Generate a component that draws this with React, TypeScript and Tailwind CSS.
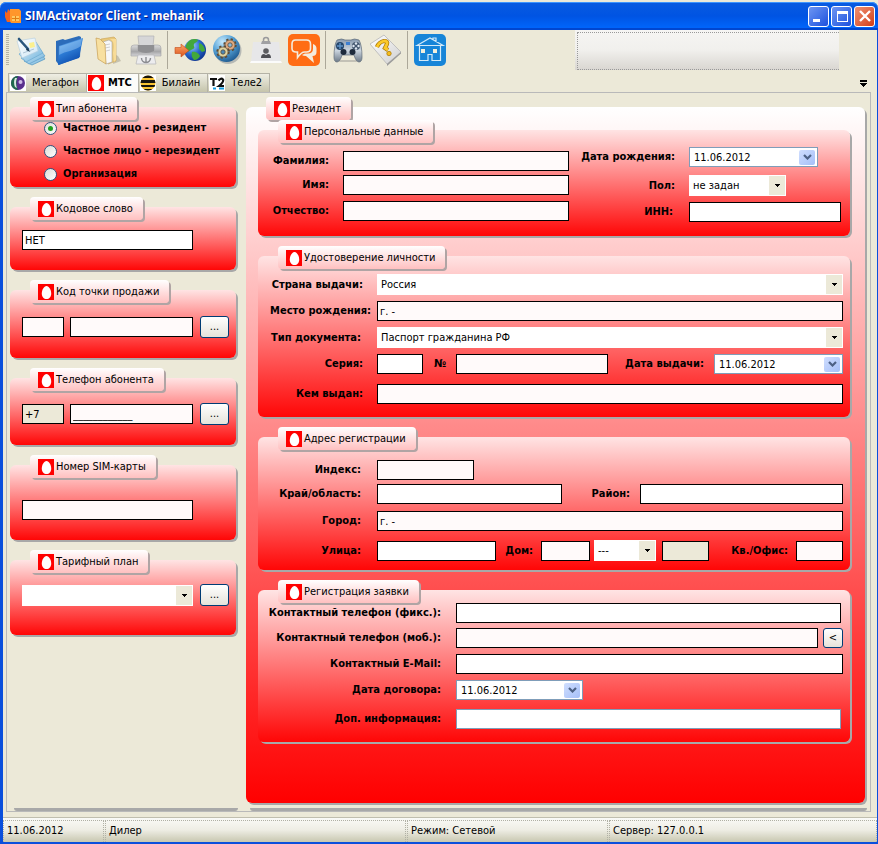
import type { ReactNode } from 'react';

const RED_BODY =
  'bg-linear-to-b/srgb from-[#ffe4e4] to-[#ff0606] rounded-md shadow-[2px_2px_0_#a8a8a8]';
const FIELD = 'h-5 min-w-0 border px-0.5 text-[11px] outline-none';
const WARM = 'bg-[#fffafa]';

function EggIcon() {
  return (
    <svg className="size-4 shrink-0" viewBox="0 0 16 16" aria-hidden="true">
      <rect width="16" height="16" fill="#ff0000" />
      <path d="M8.500 2C11 2 13.200 6 13.200 9.500C13.200 13 11.200 15 8.500 15S3.800 13 3.800 9.500C3.800 6 6 2 8.500 2Z" fill="#fff" />
    </svg>
  );
}

function Legend({ children }: { children: ReactNode }) {
  return (
    <h2 className="-mt-2.5 ml-5 flex h-[23px] items-center gap-0.5 self-start rounded-sm bg-linear-to-b/srgb from-white to-[#ffc0c0] pr-2.5 pl-2 font-normal whitespace-nowrap shadow-[2px_2px_0_#b0a4a4]">
      <EggIcon />
      {children}
    </h2>
  );
}

function Group({ title, className = '', children }: { title: string; className?: string; children: ReactNode }) {
  return (
    <section className={`mt-2.5 flex flex-col ${RED_BODY} ${className}`}>
      <Legend>{title}</Legend>
      {children}
    </section>
  );
}

function Text({ id, label, className = '', value = '', bg = 'bg-white', line = 'border-black' }: { id: string; label?: string; className?: string; value?: string; bg?: string; line?: string }) {
  return <input id={id} aria-label={label} type="text" defaultValue={value} className={`${FIELD} ${line} ${bg} ${className}`} />;
}

function Select({ id, label, value, className = '' }: { id: string; label?: string; value: string; className?: string }) {
  return (
    <div className={`relative h-[21px] bg-white ${className}`}>
      <select id={id} aria-label={label} className="h-full w-full appearance-none bg-transparent pr-5 pl-1 text-[11px] outline-none">
        <option>{value}</option>
      </select>
      <span className="pointer-events-none absolute inset-y-px right-px flex w-4 items-center justify-center bg-[#ece9d8]">
        <svg width="5" height="3" viewBox="0 0 5 3" shapeRendering="crispEdges">
          <path d="M0 0h5v1H4v1H3v1H2V2H1V1H0z" />
        </svg>
      </span>
    </div>
  );
}

function DateField({ id, className = '' }: { id: string; className?: string }) {
  return (
    <div className={`flex h-5 items-center border border-[#7f9db9] bg-white pr-0.5 ${className}`}>
      <input id={id} type="text" defaultValue="11.06.2012" className="h-full w-0 min-w-0 flex-1 pl-1 text-[11px] outline-none" />
      <button type="button" aria-label="Календарь" className="flex h-[15px] w-4 items-center justify-center rounded-xs bg-linear-to-br from-[#d0defe] to-[#a5bff8]">
        <svg width="9" height="6" viewBox="0 0 9 6">
          <path d="M1 1l3.500 3.500L8 1" fill="none" stroke="#4d6185" strokeWidth="2.200" />
        </svg>
      </button>
    </div>
  );
}

function Label({ htmlFor, className = '', children }: { htmlFor: string; className?: string; children: ReactNode }) {
  return (
    <label htmlFor={htmlFor} className={`shrink-0 text-right font-bold whitespace-nowrap ${className}`}>
      {children}
    </label>
  );
}

function DotsButton({ label }: { label: string }) {
  return (
    <button type="button" aria-label={label} className="ml-[7px] h-[22px] w-[29px] rounded-[3px] border border-[#003c74] bg-linear-to-b from-white to-[#e6e3da] text-[11px] leading-4">
      ...
    </button>
  );
}

function Radio({ label, checked }: { label: string; checked?: boolean }) {
  return (
    <label className="flex h-4 items-center gap-1.5 font-bold whitespace-nowrap">
      <input
        type="radio"
        name="subscriber"
        defaultChecked={checked}
        className="grid size-[13px] shrink-0 appearance-none place-items-center rounded-full border border-[#2f5580] bg-linear-to-br from-[#dcdcd7] to-white before:size-[5px] before:rounded-full checked:before:bg-[#21a121]"
      />
      {label}
    </label>
  );
}

/* Toolbar pictures */

function NotesIcon() {
  return (
    <svg className="size-8" viewBox="0 0 32 32">
      <defs>
        <linearGradient id="nt" x1="0" y1="0" x2="1" y2="1"><stop stopColor="#fff" /><stop offset="1" stopColor="#cfe6f5" /></linearGradient>
        <linearGradient id="nu" x1="0" y1="0" x2="1" y2="1"><stop stopColor="#e6f3fb" /><stop offset="1" stopColor="#6fb3dc" /></linearGradient>
      </defs>
      <path d="M8 27l16-9 5 7-13 6z" fill="url(#nu)" stroke="#4f94c0" strokeWidth=".7" />
      <path d="M5 24l17-11 7 9-16 8z" fill="url(#nu)" stroke="#5b9cc8" strokeWidth=".7" />
      <path d="M3 20l17-12 7 11-17 9z" fill="url(#nu)" stroke="#6aa9d0" strokeWidth=".7" />
      <path d="M1 7l18-3 3 13-16 7z" fill="url(#nt)" stroke="#b4cddd" strokeWidth=".6" />
      <path d="M13 9l5-1 1 5-5 1z" fill="#fbf08f" />
      <path d="M7 19l11-4" stroke="#9db8cc" strokeWidth=".8" />
      <path d="M3 5l9 10" stroke="#2a567d" strokeWidth="2.600" strokeLinecap="round" />
      <path d="M11 14l3.500 4-4.500-2z" fill="#18344e" />
    </svg>
  );
}

function BlueFolderIcon() {
  return (
    <svg className="size-8" viewBox="0 0 32 32">
      <defs>
        <linearGradient id="bf" x1="0" y1="0" x2=".5" y2="1"><stop stopColor="#7dbcf4" /><stop offset=".5" stopColor="#2f7fd8" /><stop offset="1" stopColor="#0d4cae" /></linearGradient>
      </defs>
      <path d="M2 7l7-2 2 1 14-4 2 1-1 20L5 31l-3-4z" fill="#2c6cba" />
      <path d="M5 12L29 4l-4 20L4 31z" fill="url(#bf)" />
      <path d="M5.500 12.500L28 5l-1.200 7C20 17 12 17 5 21z" fill="#b6ddfb" opacity=".4" />
    </svg>
  );
}

function YellowFolderIcon() {
  return (
    <svg className="size-8" viewBox="0 0 32 32">
      <path d="M22 20l4 2 3 5-8 3z" fill="#9a927d" opacity=".45" />
      <path d="M9 5l13-2 2 2v22l-8 3z" fill="#e9c878" stroke="#c9a153" strokeWidth=".6" />
      <path d="M11 8l6-2 3 2v20l-6 2z" fill="#f7f7f7" stroke="#a9a9a9" strokeWidth=".6" />
      <path d="M13 11l5-1M13 14l5-1M14 17l4-1" stroke="#c4c4c4" strokeWidth=".8" />
      <path d="M4 4l4 1 5 5 1 20-8-5z" fill="#f8e0a0" stroke="#c79d52" strokeWidth=".7" />
      <path d="M18 5c5 2 4 9 3 14l1 9 2-2V5z" fill="#f8dc98" />
    </svg>
  );
}

function PrinterIcon() {
  return (
    <svg className="size-8" viewBox="0 0 32 32">
      <defs>
        <linearGradient id="pr" x1="0" y1="0" x2="0" y2="1"><stop stopColor="#dcdcdc" /><stop offset=".6" stopColor="#a6a6a8" /><stop offset="1" stopColor="#d5d5d8" /></linearGradient>
      </defs>
      <path d="M8 2h16l-1 10H9z" fill="#d6d6d8" stroke="#b1b1b4" strokeWidth=".7" />
      <path d="M1 14q0-3 3-3h4v5h16v-5h4q3 0 3 3v8H1z" fill="url(#pr)" stroke="#a3a3a6" strokeWidth=".6" />
      <path d="M8 11h16v6q-8 4-16 0z" fill="#8f8f92" />
      <path d="M8 21h16l2 9H6z" fill="#ececee" stroke="#b4b4b8" strokeWidth=".7" />
      <path d="M11.500 24a4.500 4.500 0 1 0 9 0M16 29v-6" fill="none" stroke="#8b8c91" strokeWidth="1.400" />
    </svg>
  );
}

function GlobeIcon() {
  return (
    <svg className="size-8" viewBox="0 0 32 32">
      <defs>
        <radialGradient id="gl" cx=".35" cy=".3" r=".8"><stop stopColor="#a0d0ff" /><stop offset=".5" stopColor="#2869cd" /><stop offset="1" stopColor="#0b2d86" /></radialGradient>
        <linearGradient id="ar" x1="0" y1="0" x2="0" y2="1"><stop stopColor="#ffa469" /><stop offset="1" stopColor="#d8541b" /></linearGradient>
      </defs>
      <circle cx="21" cy="16" r="11" fill="url(#gl)" />
      <path d="M14 8c4-4 8-3 10-2-1 3-3 2-4 4s2 4-1 5-4 4-7 2c-1-4 0-7 2-9zM25 9c4 1 6 5 6 8l-3 1-3-3zM18 18c4-1 7 2 8 4-1 2-3 4-6 4-2-2-3-5-2-8z" fill="#43a83a" />
      <path d="M1 13.500h6V10l8 6.500L7 23v-3.500H1z" fill="url(#ar)" stroke="#c24a17" strokeWidth=".6" />
    </svg>
  );
}

function Gear({ x, y, fill, hub }: { x: number; y: number; fill: string; hub: string }) {
  return (
    <g transform={`translate(${x} ${y})`}>
      <circle r="5.200" fill="none" stroke="#5b4a35" strokeWidth="3" strokeDasharray="2 2.080" />
      <circle r="5" fill={fill} stroke="#6b573e" strokeWidth=".7" />
      <circle r="2.200" fill={hub} stroke="#5b4a35" strokeWidth=".8" />
    </g>
  );
}

function GearsIcon() {
  return (
    <svg className="size-8" viewBox="0 0 32 32">
      <defs>
        <radialGradient id="gb" cx=".35" cy=".25" r=".8"><stop stopColor="#c5e8fb" /><stop offset=".5" stopColor="#56a3d8" /><stop offset="1" stopColor="#1d588f" /></radialGradient>
      </defs>
      <circle cx="16" cy="16.500" r="13.500" fill="#7f8a92" opacity=".5" />
      <circle cx="14.500" cy="14.500" r="13.500" fill="url(#gb)" />
      <Gear x={18} y={11} fill="#dfa980" hub="#86b9dc" />
      <Gear x={11} y={18} fill="#ded3a0" hub="#4b88b5" />
    </svg>
  );
}

function BadgeIcon() {
  return (
    <svg className="size-8" viewBox="0 0 32 32">
      <path d="M3 8h26l2 20H1z" fill="#e7e7e9" />
      <path d="M1 27h30l1 2H0z" fill="#fbfbfb" />
      <path d="M13.500 7V6a2.500 2.500 0 0 1 5 0v1" fill="none" stroke="#9a9a9c" strokeWidth="1.500" />
      <path d="M11 10l1-3h8l1 3z" fill="#a0a0a3" />
      <circle cx="16" cy="17" r="2.800" fill="#5d5d61" />
      <path d="M11 24q0-4 3-4l2 1 2-1q3 0 3 4z" fill="#4f4f54" />
    </svg>
  );
}

function ChatIcon() {
  return (
    <svg className="size-8" viewBox="0 0 32 32">
      <rect width="32" height="32" rx="5" fill="#ff6c14" />
      <path d="M7.500 6h11q4 0 4 4v4.500q0 3.500-4 3.500h-2q-3 0-7 5.500V18H8q-4 0-4-3.500V10q0-4 3.500-4z" fill="none" stroke="#f4ecdd" strokeWidth="1.600" />
      <path d="M25 10q3.500 1 3.500 4.500V18q0 4-4 4l1.500 7-8-7q-3 0-4-1l3-1.500h3q5 0 5-5z" fill="#f4ecdd" />
    </svg>
  );
}

function GamepadIcon() {
  return (
    <svg className="size-8" viewBox="0 0 32 32">
      <defs>
        <linearGradient id="gp" x1="0" y1="0" x2="0" y2="1"><stop stopColor="#8698ad" /><stop offset=".5" stopColor="#cbd5df" /><stop offset="1" stopColor="#6c7987" /></linearGradient>
      </defs>
      <path d="M7 26h18v2H7z" fill="#777" opacity=".35" />
      <path d="M5 6q5-2 8 0h6q3-2 8 0 3 5 3 17 0 5-3 5-3 0-5-7H10q-2 7-5 7-3 0-3-5Q2 11 5 6z" fill="url(#gp)" stroke="#5f6b79" strokeWidth=".7" />
      <circle cx="8" cy="12" r="4" fill="#24476e" /><path d="M8 9v6M5 12h6" stroke="#5f93c6" strokeWidth="1.400" />
      <circle cx="24" cy="12" r="4" fill="#43566e" />
      <circle cx="24" cy="9.500" r="1.200" fill="#dfe7f2" /><circle cx="24" cy="14.500" r="1.200" fill="#dfe7f2" /><circle cx="21.500" cy="12" r="1.200" fill="#dfe7f2" /><circle cx="26.500" cy="12" r="1.200" fill="#dfe7f2" />
      <circle cx="11.500" cy="18" r="3" fill="#1e2b3c" /><circle cx="20.500" cy="18" r="3" fill="#1e2b3c" />
      <rect x="14" y="8" width="4" height="3" fill="#3e7fd0" />
    </svg>
  );
}

function HelpCardIcon() {
  return (
    <svg className="size-8" viewBox="0 0 32 32">
      <defs>
        <linearGradient id="hc" x1="0" y1="0" x2="1" y2="1"><stop stopColor="#fff" /><stop offset="1" stopColor="#cfcfcf" /></linearGradient>
      </defs>
      <path d="M0 10L14 1l17 17-14 12z" fill="url(#hc)" stroke="#b5b5b5" strokeWidth=".8" />
      <path d="M17 30l14-12v1.500L17 32z" fill="#999" />
      <path d="M7 13q2-5 7-6 4 0 3 3l-2 4 3 2" fill="none" stroke="#a87403" strokeWidth="4.200" />
      <path d="M7 13q2-5 7-6 4 0 3 3l-2 4 3 2" fill="none" stroke="#fbc928" strokeWidth="2.800" />
      <circle cx="19" cy="19.500" r="2.200" fill="#f5bd1e" stroke="#a87403" strokeWidth=".7" />
    </svg>
  );
}

function HouseIcon() {
  return (
    <svg className="size-8" viewBox="0 0 32 32">
      <rect width="32" height="32" rx="5" fill="#1785d8" />
      <g fill="none" stroke="#d3eaf9" strokeWidth="1.200">
        <path d="M3 11.500L16 4l13 7.500zM19 5.500V4h3v4M5.500 12v14.500H14v-6h4v6h8.500V12" />
      </g>
      <path d="M7 15h4v4H7zM19 15h4v4h-4z" fill="#f2efdc" />
    </svg>
  );
}

function AppIcon() {
  return (
    <svg className="size-4" viewBox="0 0 16 16">
      <path d="M0 3l2 2 1-4 2 2 2-2v13H2L0 9z" fill="#f5631c" />
      <path d="M5 1h9l2 2v12H6l-1-2z" fill="#ff962b" />
      <rect x="7" y="8" width="7" height="5" fill="#ffc861" />
      <path d="M7 10.500h7M10.500 8v5" stroke="#e07d12" />
    </svg>
  );
}

function MegafonIcon() {
  return (
    <svg className="size-4" viewBox="0 0 16 16">
      <rect width="16" height="16" fill="#fff" />
      <circle cx="8" cy="8" r="7" fill="#59308d" />
      <path d="M8 1a7 7 0 0 0 0 14c-2-4-2-9 0-14z" fill="#1f6b4d" />
      <path d="M5 3q-2 4 0 9l2 1q-2-5 0-10z" fill="#d9e6e2" />
      <circle cx="10.500" cy="7" r="2" fill="#cdb9e6" />
    </svg>
  );
}

function BeelineIcon() {
  return (
    <svg className="size-4" viewBox="0 0 16 16">
      <rect width="16" height="16" fill="#fff" />
      <clipPath id="bee"><circle cx="8" cy="8" r="7.500" /></clipPath>
      <g clipPath="url(#bee)">
        <rect width="16" height="16" fill="#f9c332" />
        <path d="M0 0h16v3H0zM0 5h16v3H0zM0 10h16v2H0zM0 14h16v2H0z" fill="#18150e" />
      </g>
    </svg>
  );
}

function Tele2Icon() {
  return (
    <svg className="size-4" viewBox="0 0 16 16">
      <rect width="16" height="16" fill="#fff" />
      <path d="M1 4h7M4.500 4v7M9.500 5.500Q12 2.500 14 4.500 15 7 10 11h5" fill="none" stroke="#111" strokeWidth="2.200" />
      <path d="M4 13.500h3M10 13.500h5" stroke="#159be0" strokeWidth="2" />
    </svg>
  );
}

function ToolGroup({ items }: { items: [string, ReactNode][] }) {
  return (
    <div className="flex gap-1.5">
      {items.map(([name, icon]) => (
        <button key={name} type="button" aria-label={name} className="size-8">
          {icon}
        </button>
      ))}
    </div>
  );
}

function Separator() {
  return <div className="mr-1.5 ml-[5px] h-[38px] w-px bg-[#aca899]" />;
}

function Tab({ icon, children, active }: { icon: ReactNode; children: ReactNode; active?: boolean }) {
  return (
    <button
      type="button"
      role="tab"
      aria-selected={!!active}
      className={`flex h-[19px] items-center border-t border-r border-[#b4b2a6] pl-px ${
        active ? 'gap-1 bg-[#fcfcfa] pr-1.5 font-bold' : 'gap-1.5 bg-linear-to-b from-[#efeee4] to-[#c5c4ab] pr-[7px]'
      }`}
    >
      {icon}
      {children}
    </button>
  );
}

const CAPTION = 'flex size-[21px] items-center justify-center rounded-[3px] border border-white';

export default function App() {
  return (
    <div className="flex min-h-screen flex-col bg-[#ece9d8] pt-0.5 font-['DejaVu_Sans_Condensed','DejaVu_Sans',sans-serif] text-[11px] leading-[14px] text-black">
      <header className="flex h-7 items-center gap-1 rounded-t-md bg-linear-to-b from-[#0a5be0] via-[#0054e3] to-[#0068ff] pr-[3px] pl-[5px] shadow-[inset_0_1px_0_#3c95ff,inset_0_-2px_0_#0046d0]">
        <AppIcon />
        <h1 className="flex-1 font-['Open_Sans',sans-serif] text-[12px] font-bold text-white [text-shadow:1px_1px_0_#0a1883]">SIMActivator Client - mehanik</h1>
        <div className="flex gap-0.5">
          <button type="button" aria-label="Свернуть" className={`${CAPTION} bg-linear-to-br from-[#6e95f2] to-[#1d4fdd]`}>
            <svg className="size-4" viewBox="0 0 16 16"><path d="M2 11h7v3H2z" fill="#fff" /></svg>
          </button>
          <button type="button" aria-label="Развернуть" className={`${CAPTION} bg-linear-to-br from-[#6e95f2] to-[#1d4fdd]`}>
            <svg className="size-4" viewBox="0 0 16 16" shapeRendering="crispEdges"><path d="M3 3h11v11H3zM4 6v7h9V6z" fill="#fff" fillRule="evenodd" /></svg>
          </button>
          <button type="button" aria-label="Закрыть" className={`${CAPTION} bg-linear-to-br from-[#ee9070] to-[#d33a10]`}>
            <svg className="size-4" viewBox="0 0 16 16"><path d="M3 3l10 10M13 3L3 13" stroke="#fff" strokeWidth="2.400" /></svg>
          </button>
        </div>
      </header>

      <div className="flex flex-1 flex-col border-r border-b-2 border-l-[3px] border-[#0a4fdc]">
        <div role="toolbar" className="flex h-10 items-center pl-[3px]">
          <div className="mr-[7px] h-8 w-[3px] bg-[repeating-linear-gradient(to_bottom,#b5b3a5_0_1px,#ece9d8_1px_2px)]" />
          <ToolGroup items={[['Договор', <NotesIcon />], ['Открыть', <BlueFolderIcon />], ['Архив', <YellowFolderIcon />], ['Печать', <PrinterIcon />]]} />
          <Separator />
          <ToolGroup items={[['Отправить', <GlobeIcon />], ['Настройки', <GearsIcon />], ['Абонент', <BadgeIcon />], ['Сообщения', <ChatIcon />]]} />
          <Separator />
          <ToolGroup items={[['Игры', <GamepadIcon />], ['Справка', <HelpCardIcon />]]} />
          <Separator />
          <ToolGroup items={[['Домой', <HouseIcon />]]} />
          <div className="mr-[38px] ml-auto h-10 w-[264px] bg-linear-to-b from-[#f6f5f3] via-[#f1f0ed] to-[#d9d6d1] pt-0.5 pl-0.5">
            <div className="h-[38px] border-y border-l border-dotted border-[#999]" />
          </div>
        </div>

        <div className="mt-[3px] flex items-end pr-2.5 pl-[5px]">
          <div role="tablist" className="flex border-l border-[#b4b2a6]">
            <Tab icon={<MegafonIcon />}>Мегафон</Tab>
            <Tab active icon={<EggIcon />}>МТС</Tab>
            <Tab icon={<BeelineIcon />}>Билайн</Tab>
            <Tab icon={<Tele2Icon />}>Теле2</Tab>
          </div>
          <button type="button" aria-label="Список вкладок" className="mb-[5px] ml-auto">
            <svg width="7" height="7" viewBox="0 0 7 7" shapeRendering="crispEdges"><path d="M0 0h7v2H0zM0 3h7v1H6v1H5v1H4v1H3V6H2V5H1V4H0z" /></svg>
          </button>
        </div>

        <main className="mr-1.5 ml-[3px] flex flex-1 flex-col border border-[#b9b9b9] pr-[5px] pl-[3px]">
          <div className="flex flex-1 gap-2.5 pt-1">
            <div className="flex w-[226px] shrink-0 flex-col gap-2.5">
              <Group title="Тип абонента" className="pb-[5px]">
                <div className="flex flex-col gap-[7px] pl-[34px]">
                  <Radio label="Частное лицо - резидент" checked />
                  <Radio label="Частное лицо - нерезидент" />
                  <Radio label="Организация" />
                </div>
              </Group>
              <Group title="Кодовое слово" className="pb-5">
                <div className="flex pt-2.5 pl-3"><Text id="code" label="Кодовое слово" value="НЕТ" className="w-[171px]" /></div>
              </Group>
              <Group title="Код точки продажи" className="pb-5">
                <div className="flex items-center pt-[13px] pl-3">
                  <Text id="pos1" label="Код" bg={WARM} className="mr-1.5 w-[42px]" />
                  <Text id="pos2" label="Точка продажи" bg={WARM} className="w-[123px]" />
                  <DotsButton label="Выбрать точку" />
                </div>
              </Group>
              <Group title="Телефон абонента" className="pb-5">
                <div className="flex items-center pt-3 pl-3">
                  <Text id="prefix" label="Код страны" value="+7" bg="bg-[#ece9d8]" className="mr-1.5 w-[42px]" />
                  <Text id="phone" label="Телефон абонента" value="____________" bg={WARM} className="w-[123px]" />
                  <DotsButton label="Выбрать телефон" />
                </div>
              </Group>
              <Group title="Номер SIM-карты" className="pb-5">
                <div className="flex pt-[22px] pl-3"><Text id="sim" label="Номер SIM-карты" bg={WARM} className="w-[171px]" /></div>
              </Group>
              <Group title="Тарифный план" className="pb-[29px]">
                <div className="flex items-center pt-[11px] pl-3">
                  <Select id="plan" label="Тарифный план" value="" className="w-[171px]" />
                  <DotsButton label="Выбрать план" />
                </div>
              </Group>
            </div>

            <section className="mt-2.5 mb-[5px] flex flex-1 flex-col rounded-md bg-linear-to-b/srgb from-white to-[#ff0000] pr-[15px] pb-[61px] pl-3 shadow-[2px_2px_0_#a8a8a8]">
              <div className="-ml-3 flex"><Legend>Резидент</Legend></div>

              <div className="flex flex-col gap-2.5">
                <Group title="Персональные данные" className="pb-3.5">
                  <div className="flex pr-[9px]">
                    <div className="flex flex-1 flex-col pt-2">
                      <div className="mb-1 flex items-center"><Label htmlFor="surname" className="w-[85px] pr-3.5">Фамилия:</Label><Text id="surname" bg={WARM} className="flex-1" /></div>
                      <div className="mb-1.5 flex items-center"><Label htmlFor="name" className="w-[85px] pr-3.5">Имя:</Label><Text id="name" bg={WARM} className="flex-1" /></div>
                      <div className="flex items-center"><Label htmlFor="patronymic" className="w-[85px] pr-3.5">Отчество:</Label><Text id="patronymic" bg={WARM} className="flex-1" /></div>
                    </div>
                    <div className="flex flex-col pt-1">
                      <div className="mb-2 flex items-center"><Label htmlFor="birth" className="w-[120px] pr-3.5">Дата рождения:</Label><DateField id="birth" className="w-[129px]" /></div>
                      <div className="mb-1.5 flex items-center"><Label htmlFor="sex" className="w-[120px] pr-3.5">Пол:</Label><Select id="sex" value="не задан" className="w-[97px]" /></div>
                      <div className="flex items-center"><Label htmlFor="inn" className="w-[120px] pr-4">ИНН:</Label><Text id="inn" className="w-[152px]" /></div>
                    </div>
                  </div>
                </Group>

                <Group title="Удостоверение личности" className="pb-[13px]">
                  <div className="flex flex-col gap-1.5 pt-[5px] pr-[7px]">
                    <div className="flex items-center"><Label htmlFor="country" className="w-[119px] pr-3.5">Страна выдачи:</Label><Select id="country" value="Россия" className="flex-1" /></div>
                    <div className="flex items-center"><Label htmlFor="place" className="w-[119px] pr-1.5">Место рождения:</Label><Text id="place" value="г. -" bg={WARM} className="flex-1" /></div>
                    <div className="flex items-center"><Label htmlFor="doc" className="w-[119px] pr-4">Тип документа:</Label><Select id="doc" value="Паспорт гражданина РФ" className="flex-1" /></div>
                    <div className="flex items-center">
                      <Label htmlFor="series" className="w-[119px] pr-3.5">Серия:</Label>
                      <Text id="series" className="w-[46px]" />
                      <Label htmlFor="number" className="w-[33px] pr-2.5">№</Label>
                      <Text id="number" bg={WARM} className="flex-1" />
                      <Label htmlFor="issued" className="w-[106px] pr-2.5">Дата выдачи:</Label>
                      <DateField id="issued" className="w-[129px]" />
                    </div>
                    <div className="mt-1 flex items-center"><Label htmlFor="issuer" className="w-[119px] pr-3.5">Кем выдан:</Label><Text id="issuer" bg={WARM} className="flex-1" /></div>
                  </div>
                </Group>

                <Group title="Адрес регистрации" className="pb-[9px]">
                  <div className="flex flex-col pt-2.5 pr-[7px]">
                    <div className="mb-1 flex items-center"><Label htmlFor="zip" className="w-[119px] pr-4">Индекс:</Label><Text id="zip" bg={WARM} className="w-[97px]" /></div>
                    <div className="mb-[7px] flex items-center">
                      <Label htmlFor="region" className="w-[119px] pr-4">Край/область:</Label>
                      <Text id="region" className="w-[185px]" />
                      <Label htmlFor="district" className="w-[78px] pr-2.5">Район:</Label>
                      <Text id="district" className="flex-1" />
                    </div>
                    <div className="mb-[9px] flex items-center"><Label htmlFor="city" className="w-[119px] pr-4">Город:</Label><Text id="city" value="г. -" bg={WARM} className="flex-1" /></div>
                    <div className="flex items-center">
                      <Label htmlFor="street" className="w-[119px] pr-4">Улица:</Label>
                      <Text id="street" className="w-0 flex-1" />
                      <Label htmlFor="house" className="w-[45px] pr-2">Дом:</Label>
                      <Text id="house" bg={WARM} className="mr-1 w-[49px]" />
                      <Select id="block" label="Тип строения" value="---" className="mr-1.5 w-[62px]" />
                      <Text id="blockno" label="Номер строения" bg="bg-[#ece9d8]" className="w-[47px]" />
                      <Label htmlFor="flat" className="w-[87px] pr-2">Кв./Офис:</Label>
                      <Text id="flat" bg={WARM} className="w-[47px]" />
                    </div>
                  </div>
                </Group>

                <Group title="Регистрация заявки" className="pb-[13px]">
                  <div className="flex flex-col gap-1.5 pr-[7px]">
                    <div className="-mb-px flex items-center pr-0.5"><Label htmlFor="tel1" className="w-[198px] pr-[15px]">Контактный телефон (фикс.):</Label><Text id="tel1" className="flex-1" /></div>
                    <div className="flex h-5 items-center">
                      <Label htmlFor="tel2" className="w-[198px] pr-[15px]">Контактный телефон (моб.):</Label>
                      <Text id="tel2" bg={WARM} className="flex-1" />
                      <button type="button" aria-label="Подставить телефон" className="ml-[5px] h-5 w-5 rounded-[3px] border border-[#003c74] bg-linear-to-b from-white to-[#e6e3da] leading-4">&lt;</button>
                    </div>
                    <div className="flex items-center"><Label htmlFor="mail" className="w-[198px] pr-[15px]">Контактный E-Mail:</Label><Text id="mail" className="flex-1" /></div>
                    <div className="flex items-center"><Label htmlFor="contract" className="w-[198px] pr-[15px]">Дата договора:</Label><DateField id="contract" className="w-[127px]" /></div>
                    <div className="mt-[3px] flex items-center pr-0.5"><Label htmlFor="extra" className="w-[198px] pr-[15px]">Доп. информация:</Label><Text id="extra" line="border-[#7f9db9]" className="flex-1" /></div>
                  </div>
                </Group>
              </div>
            </section>
          </div>
          <div className="-mr-0.5 flex h-[3px] gap-3 pl-1">
            <div className="w-[224px] rounded-b-sm bg-[#a8a8a8]" />
            <div className="flex-1 rounded-b-sm bg-[#a8a8a8]" />
          </div>
        </main>

        <footer className="mt-[5px] flex h-[25px] border-t border-[#c0beae] bg-linear-to-b from-[#fafaf7] via-[#eeede4] to-[#c8c7b0] pt-0.5 whitespace-nowrap">
          <div className="mr-px w-[101px] border-x border-t border-dotted border-[#b0b0a4] pt-[3px] pl-[3px]">11.06.2012</div>
          <div className="mr-px w-[301px] border-x border-t border-dotted border-[#b0b0a4] pt-[3px] pl-[3px]">Дилер</div>
          <div className="mr-px w-[201px] border-x border-t border-dotted border-[#b0b0a4] pt-[3px] pl-[3px]">Режим: Сетевой</div>
          <div className="flex-1 border-x border-t border-dotted border-[#b0b0a4] pt-[3px] pl-[3px]">Сервер: 127.0.0.1</div>
        </footer>
      </div>
    </div>
  );
}
